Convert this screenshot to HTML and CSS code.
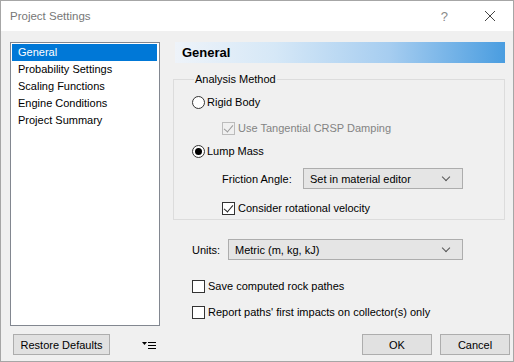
FILE: index.html
```html
<!DOCTYPE html>
<html lang="en">
<head>
  <meta charset="UTF-8">
  <title>Project Settings</title>
  <link rel="stylesheet" href="styles.css">
</head>
<body>
<div class="window">
  <div class="titlebar">
    <span class="title">Project Settings</span>
    <span class="help">?</span>
    <svg class="close" width="12" height="12" viewBox="0 0 12 12">
      <path d="M1 1 L11 11 M11 1 L1 11" stroke="#444" stroke-width="1" fill="none"/>
    </svg>
  </div>

  <div class="content">
    <ul class="pages">
      <li class="selected">General</li>
      <li>Probability Settings</li>
      <li>Scaling Functions</li>
      <li>Engine Conditions</li>
      <li>Project Summary</li>
    </ul>

    <div class="panel">
      <div class="panel-header">General</div>

      <fieldset class="group">
        <legend>Analysis Method</legend>
        <div class="row row-rigid">
          <span class="radio"></span><span>Rigid Body</span>
        </div>
        <div class="row row-tangential indent disabled">
          <span class="check checked"></span><span>Use Tangential CRSP Damping</span>
        </div>
        <div class="row row-lump">
          <span class="radio on"></span><span>Lump Mass</span>
        </div>
        <div class="row row-friction indent">
          <span class="field-label friction-label">Friction Angle:</span>
          <div class="combo friction-combo">Set in material editor<span class="chevron"></span></div>
        </div>
        <div class="row row-consider indent">
          <span class="check checked"></span><span>Consider rotational velocity</span>
        </div>
      </fieldset>

      <div class="row row-units">
        <span class="field-label units-label">Units:</span>
        <div class="combo units-combo">Metric (m, kg, kJ)<span class="chevron"></span></div>
      </div>
      <div class="row row-save">
        <span class="check"></span><span>Save computed rock pathes</span>
      </div>
      <div class="row row-report">
        <span class="check"></span><span>Report paths' first impacts on collector(s) only</span>
      </div>
    </div>
  </div>

  <div class="footer">
    <button class="btn restore">Restore Defaults</button>
    <svg class="menu-icon" width="14" height="8" viewBox="0 0 14 8">
      <path d="M0 1 H5 L2.5 4 Z" fill="#000"/>
      <path d="M6 1.5 H14 M6 4.5 H14 M6 7.5 H14" stroke="#000" stroke-width="1" fill="none"/>
    </svg>
    <div class="spacer"></div>
    <button class="btn ok">OK</button>
    <button class="btn cancel">Cancel</button>
  </div>
</div>
</body>
</html>
```

FILE: styles.css
```css
* {
  box-sizing: border-box;
}

html, body {
  margin: 0;
  padding: 0;
  background: #f0f0f0;
}

body {
  font: 11px "Liberation Sans", Arial, sans-serif;
  color: #000;
}

.window {
  width: 514px;
  height: 362px;
  border: 1px solid #a6a6a6;
  background: #f0f0f0;
  display: flex;
  flex-direction: column;
}

/* title bar */

.titlebar {
  height: 30px;
  background: #fff;
  display: flex;
  align-items: center;
  padding-left: 9px;
}

.title {
  color: #777;
  font-size: 11.5px;
  flex: 1;
}

.help {
  color: #8a8a8a;
  font-size: 13px;
  margin-right: 36px;
}

.close {
  margin-right: 17px;
}

/* main area */

.content {
  display: flex;
  padding: 11px 0 0 9px;
}

.pages {
  list-style: none;
  margin: 0;
  padding: 1px;
  width: 150px;
  height: 284px;
  background: #fff;
  border: 1px solid #828790;
}

.pages li {
  height: 17px;
  line-height: 17px;
  padding-left: 6px;
  margin-right: 1px;
}

.pages li.selected {
  background: #0078d7;
  color: #fff;
}

.panel {
  margin-left: 13px;
  width: 332px;
}

.panel-header {
  margin-left: 2px;
  height: 21px;
  line-height: 21px;
  padding-left: 7px;
  font-weight: bold;
  font-size: 13px;
  background: linear-gradient(to right, #eef3f9 0%, #d6e8f7 30%, #a6cdf0 65%, #4a9de0 100%);
}

.group {
  margin: 8px 0 0 0;
  padding: 0 0 1px 18px;
  border: 1px solid #dcdcdc;
  height: 149px;
}

.group legend {
  padding: 0 1px;
  margin-left: 2px;
  line-height: 16px;
}

.row {
  display: flex;
  align-items: center;
  height: 20px;
}

.indent {
  margin-left: 30px;
}

.disabled {
  color: #838383;
}

.row-rigid { margin-top: 5px; }
.row-tangential { margin-top: 6px; }
.row-lump { margin-top: 3px; }
.row-friction { margin-top: 7px; height: 21px; }
.row-consider { margin-top: 9px; }

.row-units {
  margin: 19px 0 0 19px;
  height: 21px;
}

.row-save { margin: 16px 0 0 19px; }
.row-report { margin: 6px 0 0 19px; }

/* controls */

.radio {
  width: 13px;
  height: 13px;
  border: 1px solid #333;
  border-radius: 50%;
  background: #fff;
  margin-right: 2px;
  display: flex;
  align-items: center;
  justify-content: center;
}

.radio.on::after {
  content: "";
  width: 7px;
  height: 7px;
  border-radius: 50%;
  background: #000;
}

.check {
  width: 13px;
  height: 13px;
  border: 1px solid #333;
  background: #fff;
  margin-right: 3px;
  position: relative;
}

.check.checked::after {
  content: "";
  position: absolute;
  left: 3px;
  top: 0px;
  width: 4px;
  height: 8px;
  border: solid #222;
  border-width: 0 1px 1px 0;
  transform: rotate(40deg);
}

.disabled .check {
  border-color: #bcbcbc;
  background: #f0f0f0;
}

.disabled .check.checked::after {
  border-color: #9a9a9a;
}

.field-label {
  display: inline-block;
}

.friction-label { width: 81px; }
.units-label { width: 36px; }

.combo {
  height: 21px;
  border: 1px solid #adadad;
  background: #e5e5e5;
  display: flex;
  align-items: center;
  padding-left: 6px;
  position: relative;
}

.friction-combo { width: 160px; }
.units-combo { width: 235px; }

.chevron {
  position: absolute;
  right: 13px;
  top: 5px;
  width: 6px;
  height: 6px;
  border: solid #555;
  border-width: 0 1px 1px 0;
  transform: rotate(45deg);
}

/* footer */

.footer {
  display: flex;
  align-items: center;
  margin-top: 8px;
  padding: 0 3px 0 12px;
}

.btn {
  font: 11px "Liberation Sans", Arial, sans-serif;
  height: 21px;
  border: 1px solid #adadad;
  background: #e1e1e1;
  color: #000;
  padding: 0;
}

.restore { width: 97px; }

.menu-icon {
  margin-left: 32px;
}

.spacer {
  flex: 1;
}

.ok, .cancel {
  width: 70px;
}

.cancel {
  margin-left: 8px;
}
```
